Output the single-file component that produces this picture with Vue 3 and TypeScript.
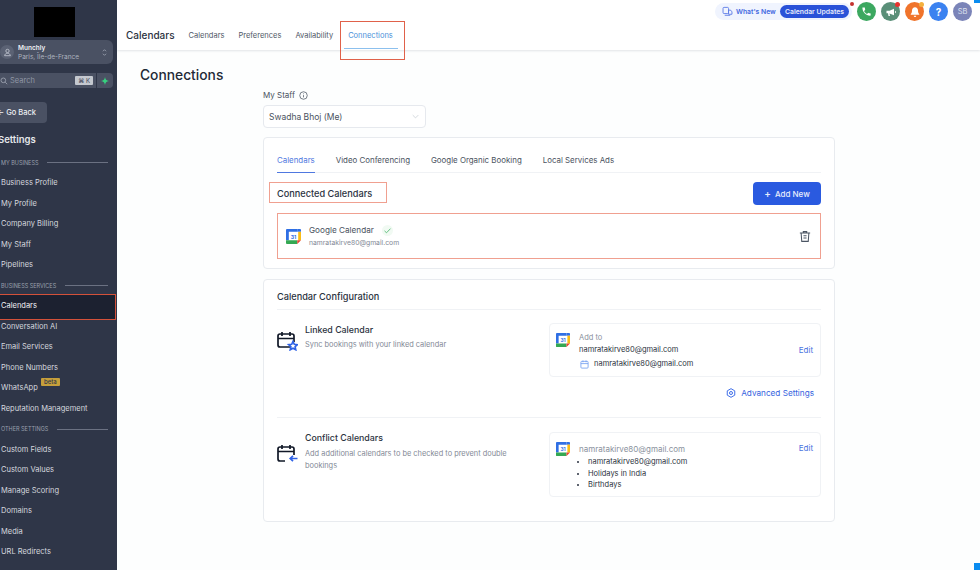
<script setup lang="ts">
type NavRow = { label: string; section?: boolean; active?: boolean; beta?: boolean }

const navRows: NavRow[] = [
  { label: 'MY BUSINESS', section: true },
  { label: 'Business Profile' },
  { label: 'My Profile' },
  { label: 'Company Billing' },
  { label: 'My Staff' },
  { label: 'Pipelines' },
  { label: 'BUSINESS SERVICES', section: true },
  { label: 'Calendars', active: true },
  { label: 'Conversation AI' },
  { label: 'Email Services' },
  { label: 'Phone Numbers' },
  { label: 'WhatsApp', beta: true },
  { label: 'Reputation Management' },
  { label: 'OTHER SETTINGS', section: true },
  { label: 'Custom Fields' },
  { label: 'Custom Values' },
  { label: 'Manage Scoring' },
  { label: 'Domains' },
  { label: 'Media' },
  { label: 'URL Redirects' },
]

const pageTabs = ['Calendars', 'Preferences', 'Availability', 'Connections']
const cardTabs = ['Calendars', 'Video Conferencing', 'Google Organic Booking', 'Local Services Ads']
const conflictList = ['namratakirve80@gmail.com', 'Holidays in India', 'Birthdays']
</script>

<template>
  <div class="app">
    <aside class="sidebar">
      <div class="logo"></div>
      <div class="location">
        <span class="loc-icon">
          <svg viewBox="0 0 14 14" width="9" height="9" fill="none" stroke="#d5d9e2" stroke-width="1.1">
            <circle cx="7" cy="4.6" r="2.6" />
            <path d="M2.5 12c.4-2.6 2.2-3.8 4.5-3.8s4.1 1.2 4.5 3.8z" />
          </svg>
        </span>
        <div class="loc-text">
          <div class="loc-name">Munchly</div>
          <div class="loc-place">Paris, Île-de-France</div>
        </div>
        <svg class="loc-arrows" viewBox="0 0 8 14" width="5" height="9" fill="none" stroke="#aab0bd" stroke-width="1.2">
          <path d="M1.5 5 4 2.5 6.5 5M1.5 9 4 11.5 6.5 9" />
        </svg>
      </div>
      <div class="search-row">
        <div class="search">
          <svg viewBox="0 0 12 12" width="8" height="8" fill="none" stroke="#a3a9b6" stroke-width="1.2">
            <circle cx="5" cy="5" r="3.5" />
            <path d="m7.8 7.8 3 3" />
          </svg>
          <span class="search-text">Search</span>
          <span class="kbd">⌘ K</span>
        </div>
        <div class="spark">
          <svg viewBox="0 0 10 10" width="8" height="8"><path d="M5 0c.5 3 1.5 4.3 5 5-3.5.7-4.5 2-5 5-.5-3-1.5-4.3-5-5 3.5-.7 4.5-2 5-5z" fill="#37d07f" /></svg>
        </div>
      </div>
      <button class="go-back" type="button">← Go Back</button>
      <div class="settings-title">Settings</div>
      <nav class="nav">
        <template v-for="row in navRows" :key="row.label">
          <div v-if="row.section" class="nav-section">
            <span>{{ row.label }}</span>
            <i></i>
          </div>
          <div v-else class="nav-item" :class="{ active: row.active }">
            {{ row.label }}
            <span v-if="row.beta" class="beta">beta</span>
          </div>
        </template>
      </nav>
    </aside>

    <div class="main">
      <header class="topbar">
        <div class="topbar-title">Calendars</div>
        <div class="page-tabs">
          <div v-for="tab in pageTabs" :key="tab" class="page-tab" :class="{ current: tab === 'Connections' }">{{ tab }}</div>
        </div>
        <div class="top-actions">
          <div class="whats-new">
            <svg viewBox="0 0 16 16" width="11" height="11" fill="none" stroke="#5a79e6" stroke-width="1.3">
              <rect x="1.5" y="2" width="8" height="9" rx="1.5" />
              <path d="M9.5 6h3l2 2.5V12h-5zM4 13.5h8" />
            </svg>
            <span class="wn-label">What's New</span>
            <span class="wn-pill">Calendar Updates</span>
            <i class="wn-dot"></i>
          </div>
          <div class="circle phone">
            <svg viewBox="0 0 24 24" width="11" height="11" fill="#fff"><path d="M6.6 10.8c1.4 2.8 3.8 5.1 6.6 6.6l2.2-2.2c.3-.3.7-.4 1-.2 1.1.4 2.3.6 3.6.6.6 0 1 .4 1 1V20c0 .6-.4 1-1 1C10.6 21 3 13.4 3 4c0-.6.4-1 1-1h3.5c.6 0 1 .4 1 1 0 1.3.2 2.5.6 3.6.1.3 0 .7-.2 1z" /></svg>
          </div>
          <div class="circle megaphone">
            <svg viewBox="0 0 24 24" width="12" height="12" fill="#fff"><path d="M3 9.5v5h3l1 5.5h3l-1-5.2 9 3.7V5.5L9 9.5zM20 9.5v5c1.3-.4 2-1.4 2-2.500s-.7-2.100-2-2.500z" /></svg>
            <i class="dot red"></i>
          </div>
          <div class="circle bell">
            <svg viewBox="0 0 24 24" width="12" height="12" fill="#fff"><path d="M12 2.5c-3.6 0-6 2.7-6 6.3 0 4-1 5.7-2.5 7.2v1.5h17V16c-1.5-1.5-2.5-3.2-2.5-7.2 0-3.6-2.4-6.3-6-6.3zM9.5 19.500a2.500 2.500 0 0 0 5 0z" /></svg>
            <i class="dot amber"></i>
          </div>
          <div class="circle help">?</div>
          <div class="circle avatar">SB</div>
        </div>
        <i class="corner-mark"></i>
      </header>

      <main class="content">
        <h1 class="page-title">Connections</h1>
        <div class="column">
          <div class="staff-label">
            My Staff
            <svg viewBox="0 0 12 12" width="9" height="9" fill="none" stroke="#4b5563" stroke-width="1">
              <circle cx="6" cy="6" r="5" />
              <path d="M6 5.5v3M6 3.3v1" />
            </svg>
          </div>
          <div class="staff-select">
            <span>Swadha Bhoj (Me)</span>
            <svg viewBox="0 0 10 6" width="7" height="5" fill="none" stroke="#c3c8d0" stroke-width="1"><path d="m1 1 4 4 4-4" /></svg>
          </div>

          <section class="card connected">
            <div class="card-tabs">
              <div v-for="(tab, i) in cardTabs" :key="tab" class="card-tab" :class="{ current: i === 0 }">{{ tab }}</div>
            </div>
            <div class="connected-head">
              <h2 class="card-title marked">Connected Calendars</h2>
              <button class="add-btn" type="button"><span class="plus">+</span>Add New</button>
            </div>
            <div class="connected-row">
              <svg class="gcal" viewBox="0 0 16 16" width="15" height="15">
                <path d="M1 0h11v3H3v9H0V1a1 1 0 0 1 1-1z" fill="#2f6fe4" />
                <path d="M12 0h3a1 1 0 0 1 1 1v2h-4z" fill="#2f6fe4" />
                <path d="M13 3h3v9h-3z" fill="#f9bc15" />
                <path d="M0 12h12v4H1a1 1 0 0 1-1-1z" fill="#34a853" />
                <path d="M12 16v-4h4z" fill="#ea4335" />
                <text x="8" y="10.5" text-anchor="middle" class="gcal-num">31</text>
              </svg>
              <div class="connected-text">
                <div class="connected-name">
                  Google Calendar
                  <span class="check">
                    <svg viewBox="0 0 12 12" width="9" height="9" fill="none" stroke="#48b56a" stroke-width="1.1"><path d="m2 6.5 2.7 2.5L10 3.5" /></svg>
                  </span>
                </div>
                <div class="connected-mail">namratakirve80@gmail.com</div>
              </div>
              <svg class="trash" viewBox="0 0 14 14" width="12" height="13" fill="none" stroke="#4b5563" stroke-width="1.2">
                <path d="M1 3h12M5 3V1.3h4V3M2.5 3l.7 9.700h7.600l.7-9.700M5.200 6h3.600M5.200 8.800h3.600" />
              </svg>
            </div>
          </section>

          <section class="card config">
            <h2 class="card-title config-title">Calendar Configuration</h2>

            <div class="config-row linked">
              <div class="config-info">
                <svg class="cal-icon" viewBox="0 0 21 20" width="21" height="20" fill="none">
                  <path d="M13 16H3a2 2 0 0 1-2-2V5a2 2 0 0 1 2-2h12a2 2 0 0 1 2 2v6M1 7.5h16M5 1v4M13 1v4" stroke="#111827" stroke-width="1.7" />
                  <path d="m16 10.5 1.3 2.8 3 .4-2.200 2 .6 3-2.700-1.500-2.700 1.500.6-3-2.200-2 3-.4z" fill="#fff" stroke="#2f62e6" stroke-width="1.7" />
                </svg>
                <div>
                  <div class="config-name">Linked Calendar</div>
                  <p class="config-desc">Sync bookings with your linked calendar</p>
                </div>
              </div>
              <div class="config-side">
                <div class="cal-box linked-box">
                  <svg class="gcal" viewBox="0 0 16 16" width="14" height="14">
                    <path d="M1 0h11v3H3v9H0V1a1 1 0 0 1 1-1z" fill="#2f6fe4" />
                    <path d="M12 0h3a1 1 0 0 1 1 1v2h-4z" fill="#2f6fe4" />
                    <path d="M13 3h3v9h-3z" fill="#f9bc15" />
                    <path d="M0 12h12v4H1a1 1 0 0 1-1-1z" fill="#34a853" />
                    <path d="M12 16v-4h4z" fill="#ea4335" />
                    <text x="8" y="10.5" text-anchor="middle" class="gcal-num">31</text>
                  </svg>
                  <div class="cal-lines linked-lines">
                    <div class="muted">Add to</div>
                    <div class="dark">namratakirve80@gmail.com</div>
                    <div class="dark with-icon">
                      <svg viewBox="0 0 10 10" width="9" height="9" fill="none" stroke="#6f9cf0" stroke-width=".9">
                        <rect x="1" y="1.5" width="8" height="7.5" rx="1" />
                        <path d="M1 4h8M3.3.5v2M6.7.5v2" />
                      </svg>
                      namratakirve80@gmail.com
                    </div>
                  </div>
                  <span class="edit">Edit</span>
                </div>
                <div class="advanced">
                  <svg viewBox="0 0 12 12" width="10" height="10" fill="none" stroke="#2f62e6" stroke-width="1.1">
                    <path d="M6 .8 10.5 3.4v5.2L6 11.200 1.500 8.600V3.400z" />
                    <circle cx="6" cy="6" r="1.8" />
                  </svg>
                  Advanced Settings
                </div>
              </div>
            </div>

            <div class="config-row conflict">
              <div class="config-info">
                <svg class="cal-icon" viewBox="0 0 21 20" width="21" height="20" fill="none">
                  <path d="M8 17H3a2 2 0 0 1-2-2V5a2 2 0 0 1 2-2h12a2 2 0 0 1 2 2v6M1 7.5h16M5 1v4M13 1v4" stroke="#111827" stroke-width="1.7" />
                  <path d="M20.5 14.5h-7M16 11.8l-2.800 2.700 2.800 2.700" stroke="#2f62e6" stroke-width="1.7" />
                </svg>
                <div>
                  <div class="config-name">Conflict Calendars</div>
                  <p class="config-desc">Add additional calendars to be checked to prevent double bookings</p>
                </div>
              </div>
              <div class="config-side">
                <div class="cal-box conflict-box">
                  <svg class="gcal" viewBox="0 0 16 16" width="14" height="14">
                    <path d="M1 0h11v3H3v9H0V1a1 1 0 0 1 1-1z" fill="#2f6fe4" />
                    <path d="M12 0h3a1 1 0 0 1 1 1v2h-4z" fill="#2f6fe4" />
                    <path d="M13 3h3v9h-3z" fill="#f9bc15" />
                    <path d="M0 12h12v4H1a1 1 0 0 1-1-1z" fill="#34a853" />
                    <path d="M12 16v-4h4z" fill="#ea4335" />
                    <text x="8" y="10.5" text-anchor="middle" class="gcal-num">31</text>
                  </svg>
                  <div class="cal-lines conflict-lines">
                    <div class="muted mail-head">namratakirve80@gmail.com</div>
                    <ul class="conflict-list">
                      <li v-for="item in conflictList" :key="item">{{ item }}</li>
                    </ul>
                  </div>
                  <span class="edit top">Edit</span>
                </div>
              </div>
            </div>
          </section>
        </div>
      </main>
      <i class="corner-mark bottom"></i>
    </div>
  </div>
</template>

<style>
html,
body {
  margin: 0;
  overflow: hidden;
}
</style>

<style scoped>
.app {
  display: flex;
  width: 980px;
  height: 570px;
  overflow: hidden;
  font-family: Inter, 'Liberation Sans', sans-serif;
  background: #fdfefe;
}

.sidebar {
  flex: 0 0 117px;
  width: 117px;
  height: 570px;
  overflow: hidden;
  background: #2f3648;
  color: #d5d8df;
  display: flex;
  flex-direction: column;
}

.logo {
  width: 41px;
  height: 30px;
  margin: 7px 0 0 34px;
  background: #000;
}

.location {
  display: flex;
  align-items: center;
  gap: 3px;
  width: 119px;
  height: 24px;
  margin: 3px 0 0 -6px;
  padding: 0 6px;
  box-sizing: border-box;
  border-radius: 6px;
  background: #4a5163;
}

.loc-icon {
  display: flex;
  align-items: center;
  justify-content: center;
  flex: none;
  width: 14px;
  height: 14px;
  border-radius: 50%;
  background: #5b6274;
}

.loc-text {
  flex: 1;
  margin-left: 1px;
}

.loc-name {
  font-size: 6.5px;
  font-weight: 600;
  line-height: 9px;
  color: #eef0f3;
}

.loc-place {
  font-size: 6.5px;
  line-height: 8px;
  color: #aeb3bf;
}

.search-row {
  display: flex;
  gap: 1px;
  height: 15px;
  margin: 9px 0 0 -6px;
}

.search {
  display: flex;
  align-items: center;
  box-sizing: border-box;
  width: 102px;
  padding: 0 3px 0 6px;
  border-radius: 4px 0 0 4px;
  background: #4a5163;
}

.search-text {
  flex: 1;
  margin-left: 2px;
  font-size: 7.5px;
  color: #9097a5;
}

.kbd {
  padding: 0 3px;
  font-size: 6px;
  line-height: 9px;
  border-radius: 1px;
  background: #c4c8cf;
  color: #3b4152;
}

.spark {
  display: flex;
  align-items: center;
  justify-content: center;
  width: 16px;
  border-radius: 0 4px 4px 0;
  background: #4a5163;
}

.go-back {
  align-self: flex-start;
  width: 53px;
  height: 21px;
  margin: 14px 0 0 -6px;
  padding: 0 0 0 3px;
  border: 0;
  border-radius: 4px;
  background: #4a5163;
  color: #eef0f3;
  font-family: inherit;
  font-size: 7.5px;
  font-weight: 500;
  text-align: left;
  white-space: nowrap;
}

.settings-title {
  height: 14px;
  margin: 10px 0 0 -2px;
  font-size: 9.5px;
  font-weight: 600;
  line-height: 14px;
  color: #e6e8ec;
}

.nav {
  margin-top: 5.5px;
}

.nav-section,
.nav-item {
  height: 20.53px;
  line-height: 20.53px;
  padding-left: 1px;
  white-space: nowrap;
}

.nav-section {
  display: flex;
  align-items: center;
  gap: 9px;
  padding-right: 9px;
  font-size: 5.5px;
  color: #9aa0ad;
}

.nav-section i {
  flex: 1;
  height: 1px;
  background: #6b7182;
}

.nav-item {
  position: relative;
  font-size: 7.5px;
  color: #d5d8df;
}

.nav-item.active {
  z-index: 1;
  isolation: isolate;
  color: #f1f2f5;
}

/* dark fill + the red annotation drawn over the sidebar */
.nav-item.active::after {
  content: '';
  position: absolute;
  left: -2px;
  right: 1px;
  top: -2px;
  bottom: -3px;
  border: 1px solid #d4513a;
  background: #1c2130;
  z-index: -1;
}

.beta {
  position: absolute;
  left: 41px;
  top: 0;
  padding: 0 3px;
  height: 8px;
  line-height: 8px;
  border-radius: 1px;
  font-size: 6px;
  font-weight: 500;
  background: #c69f3b;
  color: #2f3648;
}

.main {
  position: relative;
  flex: 1;
  min-width: 0;
  display: flex;
  flex-direction: column;
}

.topbar {
  position: relative;
  flex: none;
  display: flex;
  align-items: flex-end;
  height: 50px;
  background: #fff;
  box-shadow: 0 1px 2px rgba(60, 70, 90, 0.14);
  z-index: 1;
}

.topbar-title {
  margin: 0 0 8px 9px;
  font-size: 10px;
  font-weight: 500;
  line-height: 13px;
  color: #2b3240;
}

.page-tabs {
  display: flex;
  margin-left: 10px;
}

.page-tab {
  position: relative;
  padding: 0 4px 8px;
  margin-right: 6px;
  font-size: 7.5px;
  line-height: 11px;
  color: #4f5766;
}

.page-tab.current {
  box-sizing: border-box;
  width: 54px;
  margin-left: 1px;
  margin-bottom: 1px;
  padding: 0 4px 7px;
  color: #4a90d9;
  border-bottom: 1px solid #8cc0ee;
}

/* red annotation around the active tab */
.page-tab.current::after {
  content: '';
  position: absolute;
  left: -4px;
  right: -7px;
  top: -9px;
  bottom: -12px;
  border: 1px solid #e0614a;
}

.top-actions {
  position: absolute;
  top: 1.5px;
  right: 8px;
  display: flex;
  align-items: center;
  gap: 5px;
  height: 20px;
}

.whats-new {
  position: relative;
  display: flex;
  align-items: center;
  box-sizing: border-box;
  width: 137px;
  height: 17px;
  padding: 0 3px 0 7px;
  border-radius: 9px;
  background: #f0f4fe;
}

.wn-label {
  flex: 1;
  margin-left: 3px;
  font-size: 6.8px;
  font-weight: 600;
  color: #4167e0;
  white-space: nowrap;
}

.wn-pill {
  height: 13px;
  line-height: 13px;
  padding: 0 5px;
  border-radius: 7px;
  background: #2a52d8;
  color: #e8edfc;
  font-size: 6.8px;
  font-weight: 600;
  white-space: nowrap;
}

.wn-dot {
  position: absolute;
  right: -2px;
  top: -1px;
  width: 4px;
  height: 4px;
  border-radius: 50%;
  background: #c4322f;
}

.circle {
  position: relative;
  display: flex;
  align-items: center;
  justify-content: center;
  width: 19px;
  height: 19px;
  border-radius: 50%;
  color: #fff;
  font-size: 7.5px;
}

.phone {
  background: #3ca860;
}

.megaphone {
  background: #5a8f78;
}

.bell {
  background: #f0742c;
}

.help {
  background: #3b82f0;
  font-size: 10px;
  font-weight: 700;
}

.avatar {
  background: #7b84b8;
  color: #dfe2ef;
}

.dot {
  position: absolute;
  top: 0;
  right: 0;
  width: 5px;
  height: 5px;
  border-radius: 50%;
}

.dot.red {
  background: #e6322d;
}

.dot.amber {
  background: #f4b03e;
}

.corner-mark {
  position: absolute;
  top: 0;
  right: 0;
  width: 6px;
  height: 3px;
  background: #0a8cf0;
}

.corner-mark.bottom {
  top: auto;
  bottom: 0;
  height: 7px;
}

.content {
  flex: 1;
  min-height: 0;
}

.page-title {
  margin: 16px 0 0 23px;
  font-size: 13.8px;
  font-weight: 500;
  line-height: 18px;
  color: #222936;
}

.column {
  width: 572px;
  margin: 5px 0 0 146px;
}

.staff-label {
  display: flex;
  align-items: center;
  gap: 4px;
  height: 12px;
  font-size: 8px;
  line-height: 12px;
  color: #4a5260;
}

.staff-select {
  display: flex;
  align-items: center;
  justify-content: space-between;
  box-sizing: border-box;
  width: 163px;
  height: 23px;
  margin-top: 4px;
  padding: 0 6px 0 5px;
  border: 1px solid #e6e9ee;
  border-radius: 4px;
  background: #fff;
  font-size: 8.5px;
  color: #4a5260;
}

.card {
  box-sizing: border-box;
  border: 1px solid #e8ebef;
  border-radius: 4px;
  background: #fff;
  padding: 0 13px;
}

.connected {
  height: 132px;
  margin-top: 9px;
}

.card-tabs {
  display: flex;
  gap: 21px;
  height: 35px;
  border-bottom: 1px solid #f0f2f5;
  box-sizing: border-box;
  align-items: flex-end;
}

.card-tab {
  height: 17px;
  font-size: 7.9px;
  line-height: 11px;
  color: #4a5260;
  white-space: nowrap;
}

.card-tab.current {
  color: #4f78e0;
  border-bottom: 1px solid #4f78e0;
  margin-bottom: -1px;
}

.connected-head {
  display: flex;
  align-items: center;
  justify-content: space-between;
  height: 23px;
  margin-top: 9px;
}

.card-title {
  margin: 0;
  font-size: 9.2px;
  font-weight: 500;
  color: #2b3240;
}

.marked {
  position: relative;
}

/* red annotation around the heading */
.marked::after {
  content: '';
  position: absolute;
  left: -8px;
  right: -15px;
  top: -6px;
  bottom: -4px;
  border: 1px solid #f0a090;
}

.add-btn {
  width: 68px;
  height: 23px;
  border: 0;
  border-radius: 4px;
  background: #2a5ae0;
  color: #e8edfc;
  font-family: inherit;
  font-size: 8px;
  font-weight: 500;
}

.plus {
  margin-right: 4px;
  font-size: 10px;
  line-height: 1;
}

.connected-row {
  display: flex;
  align-items: center;
  box-sizing: border-box;
  height: 46px;
  margin-top: 8px;
  padding: 0 9px 0 8px;
  border: 1px solid #f0a090;
}

.connected-text {
  flex: 1;
  margin-left: 8px;
}

.connected-name {
  display: flex;
  align-items: center;
  font-size: 8.2px;
  line-height: 12px;
  color: #4a5260;
}

.check {
  display: flex;
  align-items: center;
  justify-content: center;
  width: 11px;
  height: 11px;
  margin-left: 8px;
  border-radius: 50%;
  background: #f1faf3;
}

.connected-mail {
  margin-top: 2px;
  font-size: 6.8px;
  line-height: 10px;
  color: #838996;
}

.gcal {
  flex: none;
}

.gcal-num {
  font-family: Inter, 'Liberation Sans', sans-serif;
  font-size: 5.5px;
  font-weight: 700;
  fill: #2f6fe4;
}

.config {
  height: 243px;
  margin-top: 10px;
}

.config-title {
  display: flex;
  align-items: center;
  height: 30px;
  padding-top: 4px;
  box-sizing: border-box;
  border-bottom: 1px solid #f0f2f5;
}

.config-row {
  display: flex;
  justify-content: space-between;
}

.linked {
  height: 108px;
  padding-top: 13px;
  box-sizing: border-box;
  border-bottom: 1px solid #f0f2f5;
}

.conflict {
  padding-top: 14px;
}

.config-info {
  display: flex;
  gap: 7px;
  width: 245px;
}

.cal-icon {
  flex: none;
  margin-top: 8px;
}

.conflict .cal-icon {
  margin-top: 12px;
}

.config-name {
  font-size: 8.8px;
  font-weight: 500;
  line-height: 14px;
  color: #2b3240;
}

.conflict .config-name {
  margin-top: -1px;
}

.config-desc {
  margin: 2px 0 0;
  font-size: 7.4px;
  line-height: 12px;
  color: #838996;
}

.conflict .config-desc {
  margin-top: 3px;
}

.config-side {
  width: 272px;
}

.cal-box {
  position: relative;
  display: flex;
  box-sizing: border-box;
  padding: 9px 6px;
  border: 1px solid #f0f2f5;
  border-radius: 4px;
}

.linked-box {
  height: 54px;
}

.conflict-box {
  height: 65px;
}

.cal-lines {
  margin-left: 9px;
  font-size: 7.5px;
  line-height: 12px;
}

.linked-lines {
  margin-top: -1px;
}

.conflict-lines {
  margin-top: 1px;
}

.muted {
  color: #8a919d;
}

.dark {
  color: #2b3240;
  white-space: nowrap;
}

.with-icon {
  display: flex;
  align-items: center;
  gap: 5px;
  margin-top: 2px;
  margin-left: 1px;
}

.mail-head {
  font-size: 8px;
}

.edit {
  position: absolute;
  right: 7px;
  top: 20px;
  font-size: 8px;
  line-height: 13px;
  color: #4a74e0;
}

.edit.top {
  top: 8.5px;
}

.advanced {
  display: flex;
  align-items: center;
  justify-content: flex-end;
  gap: 5px;
  margin: 10px 7px 0 0;
  font-size: 8.2px;
  line-height: 12px;
  color: #3563e0;
}

.conflict-list {
  margin: 1px 0 0;
  padding-left: 9px;
  color: #2b3240;
  line-height: 11.5px;
}

.trash {
  flex: none;
}
</style>
